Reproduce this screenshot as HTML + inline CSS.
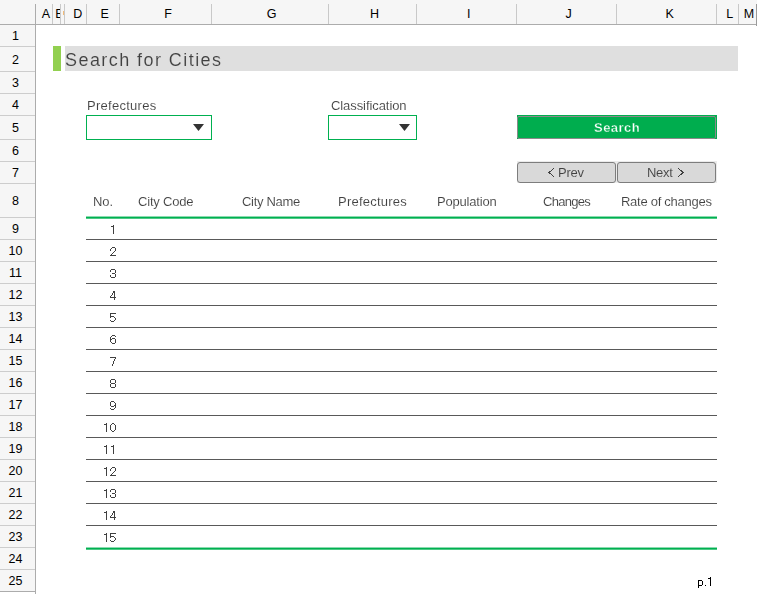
<!DOCTYPE html>
<html><head><meta charset="utf-8">
<style>
html,body{margin:0;padding:0;background:#fff;width:757px;height:594px;overflow:hidden;position:relative;font-family:"Liberation Sans",sans-serif;}
.a{position:absolute;}
.vl{position:absolute;top:4px;width:1px;height:20px;background:#c9c9c9;}
.hl{position:absolute;left:0;width:35px;height:1px;background:#cdcdcd;}
.ch{position:absolute;top:7px;font-size:12.5px;color:#000;line-height:15px;white-space:nowrap;transform:translateX(-50%);}
.rh{position:absolute;font-size:12.5px;color:#000;line-height:15px;white-space:nowrap;transform:translateX(-50%);left:15.5px;}
.t{position:absolute;line-height:20px;white-space:nowrap;transform-origin:0 0;will-change:transform;-webkit-text-stroke:0.1px #fff;}
.num{position:absolute;font-size:13px;color:#404040;line-height:16px;white-space:nowrap;right:641px;}
.dl{position:absolute;left:86px;width:631px;height:1px;background:#595959;}
</style></head><body>

<div class="a" style="left:0;top:0;width:757px;height:24px;background:#f6f6f6"></div>
<div class="a" style="left:0;top:24px;width:757px;height:1px;background:#acacac"></div>
<div class="vl" style="left:35px"></div>
<div class="vl" style="left:52px"></div>
<div class="vl" style="left:60px"></div>
<div class="vl" style="left:64px"></div>
<div class="vl" style="left:86px"></div>
<div class="vl" style="left:119px"></div>
<div class="vl" style="left:211px"></div>
<div class="vl" style="left:328px"></div>
<div class="vl" style="left:416px"></div>
<div class="vl" style="left:516px"></div>
<div class="vl" style="left:616px"></div>
<div class="vl" style="left:716px"></div>
<div class="vl" style="left:738px"></div>
<div class="vl" style="left:756px;background:#9a9a9a;height:22px"></div>
<div class="ch" style="left:46px">A</div>
<div class="ch" style="left:77.7px">D</div>
<div class="ch" style="left:104.7px">E</div>
<div class="ch" style="left:168px">F</div>
<div class="ch" style="left:271.7px">G</div>
<div class="ch" style="left:374.5px">H</div>
<div class="ch" style="left:468.7px">I</div>
<div class="ch" style="left:568.5px">J</div>
<div class="ch" style="left:669.6px">K</div>
<div class="ch" style="left:729.7px">L</div>
<div class="ch" style="left:748.9px">M</div>
<div class="a" style="left:53px;top:0;width:7px;height:24px;overflow:hidden"><div class="ch" style="left:6.5px">B</div></div>
<div class="a" style="left:63px;top:11px;width:1px;height:4px;background:rgba(240,150,40,0.6)"></div>
<div class="a" style="left:0;top:25px;width:35px;height:566px;background:#f6f6f6"></div>
<div class="hl" style="top:46px"></div>
<div class="hl" style="top:71px"></div>
<div class="hl" style="top:93px"></div>
<div class="hl" style="top:115px"></div>
<div class="hl" style="top:139px"></div>
<div class="hl" style="top:161px"></div>
<div class="hl" style="top:183px"></div>
<div class="hl" style="top:217px"></div>
<div class="hl" style="top:239px"></div>
<div class="hl" style="top:261px"></div>
<div class="hl" style="top:283px"></div>
<div class="hl" style="top:305px"></div>
<div class="hl" style="top:327px"></div>
<div class="hl" style="top:349px"></div>
<div class="hl" style="top:371px"></div>
<div class="hl" style="top:393px"></div>
<div class="hl" style="top:415px"></div>
<div class="hl" style="top:437px"></div>
<div class="hl" style="top:459px"></div>
<div class="hl" style="top:481px"></div>
<div class="hl" style="top:503px"></div>
<div class="hl" style="top:525px"></div>
<div class="hl" style="top:547px"></div>
<div class="hl" style="top:569px"></div>
<div class="a" style="left:35px;top:4px;width:1px;height:590px;background:#acacac"></div>
<div class="a" style="left:0;top:591px;width:36px;height:1px;background:#acacac"></div>
<div class="rh" style="top:29.0px">1</div>
<div class="rh" style="top:52.5px">2</div>
<div class="rh" style="top:76.0px">3</div>
<div class="rh" style="top:98.0px">4</div>
<div class="rh" style="top:121.0px">5</div>
<div class="rh" style="top:144.0px">6</div>
<div class="rh" style="top:166.0px">7</div>
<div class="rh" style="top:194.0px">8</div>
<div class="rh" style="top:222.0px">9</div>
<div class="rh" style="top:244.0px">10</div>
<div class="rh" style="top:266.0px">11</div>
<div class="rh" style="top:288.0px">12</div>
<div class="rh" style="top:310.0px">13</div>
<div class="rh" style="top:332.0px">14</div>
<div class="rh" style="top:354.0px">15</div>
<div class="rh" style="top:376.0px">16</div>
<div class="rh" style="top:398.0px">17</div>
<div class="rh" style="top:420.0px">18</div>
<div class="rh" style="top:442.0px">19</div>
<div class="rh" style="top:464.0px">20</div>
<div class="rh" style="top:486.0px">21</div>
<div class="rh" style="top:508.0px">22</div>
<div class="rh" style="top:530.0px">23</div>
<div class="rh" style="top:552.0px">24</div>
<div class="rh" style="top:574.0px">25</div>
<div class="a" style="left:53px;top:46px;width:8px;height:25px;background:#92d050"></div>
<div class="a" style="left:65px;top:46px;width:673px;height:25px;background:#dfdfdf"></div>
<div class="a" style="left:86px;top:115px;width:124px;height:23px;border:1px solid #00b050"></div>
<svg class="a" style="left:193px;top:124px" width="11" height="7"><polygon points="0,0 11,0 5.5,7" fill="#333"/></svg>
<div class="a" style="left:328px;top:115px;width:87px;height:23px;border:1px solid #00b050"></div>
<svg class="a" style="left:399px;top:124px" width="11" height="7"><polygon points="0,0 11,0 5.5,7" fill="#333"/></svg>
<div class="a" style="left:517px;top:115px;width:200px;height:24px;background:#00ad4e"></div>
<div class="a" style="left:517px;top:116px;width:197px;height:21px;border:1px solid #8a8a8a;border-radius:2px"></div>
<div class="a" style="left:517px;top:161px;width:200px;height:22px;background:#ebebeb"></div>
<div class="a" style="left:517px;top:162px;width:97px;height:19px;background:#d9d9d9;border:1px solid #7d7d7d;border-radius:3px"></div>
<div class="a" style="left:617px;top:162px;width:97px;height:19px;background:#d9d9d9;border:1px solid #7d7d7d;border-radius:3px"></div>
<div class="t" style="left:65.40px;top:50.00px;font-size:18px;color:#404040;-webkit-text-stroke:0.15px #dfdfdf;letter-spacing:1.438px">Search for Cities</div>
<div class="t" style="left:87.30px;top:96.20px;font-size:13px;color:#404040;letter-spacing:0.270px">Prefectures</div>
<div class="t" style="left:330.50px;top:96.40px;font-size:13px;color:#404040;letter-spacing:-0.077px">Classification</div>
<div class="t" style="left:593.70px;top:118.20px;font-size:13px;font-weight:bold;color:#fff;-webkit-text-stroke:0.3px #00ad4e;letter-spacing:0.460px">Search</div>
<div class="t" style="left:557.80px;top:163.00px;font-size:13px;color:#404040;-webkit-text-stroke:0.1px #d9d9d9;letter-spacing:-0.233px">Prev</div>
<div class="t" style="left:646.80px;top:163.00px;font-size:13px;color:#404040;-webkit-text-stroke:0.1px #d9d9d9;letter-spacing:-0.267px">Next</div>
<div class="t" style="left:92.70px;top:192.40px;font-size:13px;color:#404040;letter-spacing:-0.100px">No.</div>
<div class="t" style="left:137.60px;top:192.40px;font-size:13px;color:#404040;letter-spacing:-0.200px">City Code</div>
<div class="t" style="left:241.80px;top:192.40px;font-size:13px;color:#404040;letter-spacing:-0.312px">City Name</div>
<div class="t" style="left:337.80px;top:192.40px;font-size:13px;color:#404040;letter-spacing:0.230px">Prefectures</div>
<div class="t" style="left:436.70px;top:192.40px;font-size:13px;color:#404040;letter-spacing:-0.189px">Population</div>
<div class="t" style="left:542.60px;top:192.40px;font-size:13px;color:#404040;letter-spacing:-0.733px">Changes</div>
<div class="t" style="left:620.80px;top:192.40px;font-size:13px;color:#404040;letter-spacing:-0.271px">Rate of changes</div>
<div class="a" style="left:86px;top:216px;width:631px;height:1px;background:rgba(0,176,80,0.45)"></div>
<div class="a" style="left:86px;top:217px;width:631px;height:1px;background:#00b050"></div>
<div class="a" style="left:86px;top:218px;width:631px;height:1px;background:rgba(0,176,80,0.7)"></div>
<div class="a" style="left:86px;top:547px;width:631px;height:1px;background:rgba(0,176,80,0.45)"></div>
<div class="a" style="left:86px;top:548px;width:631px;height:1px;background:#00b050"></div>
<div class="a" style="left:86px;top:549px;width:631px;height:1px;background:rgba(0,176,80,0.7)"></div>
<div class="dl" style="top:239px"></div>
<div class="dl" style="top:261px"></div>
<div class="dl" style="top:283px"></div>
<div class="dl" style="top:305px"></div>
<div class="dl" style="top:327px"></div>
<div class="dl" style="top:349px"></div>
<div class="dl" style="top:371px"></div>
<div class="dl" style="top:393px"></div>
<div class="dl" style="top:415px"></div>
<div class="dl" style="top:437px"></div>
<div class="dl" style="top:459px"></div>
<div class="dl" style="top:481px"></div>
<div class="dl" style="top:503px"></div>
<div class="dl" style="top:525px"></div>
<svg class="a" style="left:0;top:0" width="757" height="594" shape-rendering="crispEdges"><path fill="#404040" d="M113 225h1v1h-1zM111 226h3v1h-3zM113 227h1v1h-1zM113 228h1v1h-1zM113 229h1v1h-1zM113 230h1v1h-1zM113 231h1v1h-1zM113 232h1v1h-1zM113 233h1v1h-1zM112 247h3v1h-3zM111 248h1v1h-1zM115 248h1v1h-1zM110 249h1v1h-1zM115 249h1v1h-1zM110 250h1v1h-1zM115 250h1v1h-1zM114 251h1v1h-1zM113 252h1v1h-1zM112 253h1v1h-1zM111 254h1v1h-1zM110 255h6v1h-6zM111 269h4v1h-4zM110 270h1v1h-1zM115 270h1v1h-1zM110 271h1v1h-1zM115 271h1v1h-1zM115 272h1v1h-1zM112 273h3v1h-3zM115 274h1v1h-1zM110 275h1v1h-1zM115 275h1v1h-1zM110 276h1v1h-1zM115 276h1v1h-1zM111 277h4v1h-4zM113 291h2v1h-2zM113 292h2v1h-2zM112 293h1v1h-1zM114 293h1v1h-1zM112 294h1v1h-1zM114 294h1v1h-1zM111 295h1v1h-1zM114 295h1v1h-1zM110 296h1v1h-1zM114 296h1v1h-1zM110 297h6v1h-6zM114 298h1v1h-1zM114 299h1v1h-1zM110 313h6v1h-6zM110 314h1v1h-1zM110 315h1v1h-1zM110 316h4v1h-4zM110 317h1v1h-1zM114 317h1v1h-1zM115 318h1v1h-1zM115 319h1v1h-1zM110 320h1v1h-1zM114 320h1v1h-1zM111 321h3v1h-3zM112 335h3v1h-3zM111 336h1v1h-1zM115 336h1v1h-1zM110 337h1v1h-1zM110 338h1v1h-1zM112 338h3v1h-3zM110 339h2v1h-2zM115 339h1v1h-1zM110 340h1v1h-1zM115 340h1v1h-1zM110 341h1v1h-1zM115 341h1v1h-1zM111 342h1v1h-1zM115 342h1v1h-1zM112 343h3v1h-3zM110 357h6v1h-6zM115 358h1v1h-1zM114 359h1v1h-1zM114 360h1v1h-1zM113 361h1v1h-1zM113 362h1v1h-1zM113 363h1v1h-1zM112 364h1v1h-1zM112 365h1v1h-1zM111 379h4v1h-4zM110 380h1v1h-1zM115 380h1v1h-1zM110 381h1v1h-1zM115 381h1v1h-1zM110 382h1v1h-1zM115 382h1v1h-1zM111 383h4v1h-4zM110 384h1v1h-1zM115 384h1v1h-1zM110 385h1v1h-1zM115 385h1v1h-1zM110 386h1v1h-1zM115 386h1v1h-1zM111 387h4v1h-4zM111 401h3v1h-3zM110 402h1v1h-1zM114 402h1v1h-1zM110 403h1v1h-1zM115 403h1v1h-1zM110 404h1v1h-1zM115 404h1v1h-1zM110 405h1v1h-1zM114 405h2v1h-2zM111 406h3v1h-3zM115 406h1v1h-1zM115 407h1v1h-1zM110 408h1v1h-1zM114 408h1v1h-1zM111 409h3v1h-3zM106 423h1v1h-1zM104 424h3v1h-3zM106 425h1v1h-1zM106 426h1v1h-1zM106 427h1v1h-1zM106 428h1v1h-1zM106 429h1v1h-1zM106 430h1v1h-1zM106 431h1v1h-1zM112 423h2v1h-2zM111 424h1v1h-1zM114 424h1v1h-1zM110 425h1v1h-1zM115 425h1v1h-1zM110 426h1v1h-1zM115 426h1v1h-1zM110 427h1v1h-1zM115 427h1v1h-1zM110 428h1v1h-1zM115 428h1v1h-1zM110 429h1v1h-1zM115 429h1v1h-1zM111 430h1v1h-1zM114 430h1v1h-1zM112 431h2v1h-2zM106 445h1v1h-1zM104 446h3v1h-3zM106 447h1v1h-1zM106 448h1v1h-1zM106 449h1v1h-1zM106 450h1v1h-1zM106 451h1v1h-1zM106 452h1v1h-1zM106 453h1v1h-1zM113 445h1v1h-1zM111 446h3v1h-3zM113 447h1v1h-1zM113 448h1v1h-1zM113 449h1v1h-1zM113 450h1v1h-1zM113 451h1v1h-1zM113 452h1v1h-1zM113 453h1v1h-1zM106 467h1v1h-1zM104 468h3v1h-3zM106 469h1v1h-1zM106 470h1v1h-1zM106 471h1v1h-1zM106 472h1v1h-1zM106 473h1v1h-1zM106 474h1v1h-1zM106 475h1v1h-1zM112 467h3v1h-3zM111 468h1v1h-1zM115 468h1v1h-1zM110 469h1v1h-1zM115 469h1v1h-1zM110 470h1v1h-1zM115 470h1v1h-1zM114 471h1v1h-1zM113 472h1v1h-1zM112 473h1v1h-1zM111 474h1v1h-1zM110 475h6v1h-6zM106 489h1v1h-1zM104 490h3v1h-3zM106 491h1v1h-1zM106 492h1v1h-1zM106 493h1v1h-1zM106 494h1v1h-1zM106 495h1v1h-1zM106 496h1v1h-1zM106 497h1v1h-1zM111 489h4v1h-4zM110 490h1v1h-1zM115 490h1v1h-1zM110 491h1v1h-1zM115 491h1v1h-1zM115 492h1v1h-1zM112 493h3v1h-3zM115 494h1v1h-1zM110 495h1v1h-1zM115 495h1v1h-1zM110 496h1v1h-1zM115 496h1v1h-1zM111 497h4v1h-4zM106 511h1v1h-1zM104 512h3v1h-3zM106 513h1v1h-1zM106 514h1v1h-1zM106 515h1v1h-1zM106 516h1v1h-1zM106 517h1v1h-1zM106 518h1v1h-1zM106 519h1v1h-1zM113 511h2v1h-2zM113 512h2v1h-2zM112 513h1v1h-1zM114 513h1v1h-1zM112 514h1v1h-1zM114 514h1v1h-1zM111 515h1v1h-1zM114 515h1v1h-1zM110 516h1v1h-1zM114 516h1v1h-1zM110 517h6v1h-6zM114 518h1v1h-1zM114 519h1v1h-1zM106 533h1v1h-1zM104 534h3v1h-3zM106 535h1v1h-1zM106 536h1v1h-1zM106 537h1v1h-1zM106 538h1v1h-1zM106 539h1v1h-1zM106 540h1v1h-1zM106 541h1v1h-1zM110 533h6v1h-6zM110 534h1v1h-1zM110 535h1v1h-1zM110 536h4v1h-4zM110 537h1v1h-1zM114 537h1v1h-1zM115 538h1v1h-1zM115 539h1v1h-1zM110 540h1v1h-1zM114 540h1v1h-1zM111 541h3v1h-3z"/>
<path fill="#000" d="M698 580h4v1h-4zM698 581h1v7h-1zM702 581h1v4h-1zM699 585h3v1h-3zM705 585h1v1h-1zM710 577h1v9h-1zM708 578h2v1h-2z"/>
<polyline points="554.2,168 549.2,172.5 554.2,177" fill="none" stroke="#404040" stroke-width="1.1"/>
<polyline points="678,168 683,172.5 678,177" fill="none" stroke="#404040" stroke-width="1.1"/></svg>
</body></html>
